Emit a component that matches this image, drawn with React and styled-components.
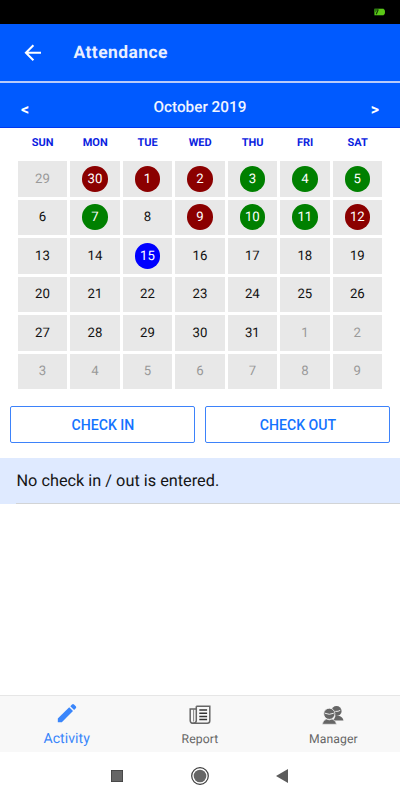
import styled, { createGlobalStyle } from 'styled-components';

const GlobalStyle = createGlobalStyle`
  * {
    box-sizing: border-box;
  }

  body {
    margin: 0;
    background: #ffffff;
    font-family: Roboto, 'Liberation Sans', sans-serif;
    text-rendering: geometricPrecision;
  }

  button {
    padding: 0;
    border: 0;
    background: none;
    font-family: inherit;
  }
`;

const Screen = styled.div`
  width: 400px;
  height: 800px;
  display: flex;
  flex-direction: column;
  overflow: hidden;
  background: #ffffff;
`;

const StatusBar = styled.div`
  height: 24px;
  display: flex;
  justify-content: flex-end;
  align-items: center;
  padding-right: 15px;
  background: #000000;
`;

const Header = styled.header`
  height: 59px;
  display: flex;
  align-items: center;
  padding-left: 24px;
  border-bottom: 2px solid #b9cbfa;
  background: #005aff;
`;

const BackButton = styled.button`
  width: 18px;
  height: 18px;
  display: flex;
`;

const Title = styled.h1`
  margin: 1px 0 0 31.5px;
  color: #e9efff;
  font-size: 17.4px;
  font-weight: 700;
  letter-spacing: 0.45px;
`;

const MonthBar = styled.div`
  height: 45px;
  display: flex;
  justify-content: space-between;
  align-items: center;
  padding: 3px 21px 0;
  border-bottom: 1px solid #0038f0;
  background: #005aff;
`;

const MonthButton = styled.button`
  padding-top: 5px;
  color: #ffffff;
  font-size: 16px;
  font-weight: 700;
`;

const MonthName = styled.div`
  padding-top: 1px;
  color: #f0f4ff;
  font-size: 15.3px;
  font-weight: 500;
`;

const Calendar = styled.section`
  padding: 0 17.7px 0 18px;
`;

const WeekRow = styled.div`
  height: 33px;
  display: grid;
  grid-template-columns: repeat(7, 1fr);
  column-gap: 3px;
  line-height: 30px;
`;

const Weekday = styled.div`
  color: #0a22e0;
  font-size: 11px;
  font-weight: 700;
  text-align: center;
`;

const DayGrid = styled.div`
  display: grid;
  grid-template-columns: repeat(7, 1fr);
  grid-auto-rows: 35.5px;
  gap: 3px;
`;

const DayCell = styled.div`
  display: flex;
  justify-content: center;
  align-items: center;
  padding-right: 0.5px;
  background: #e8e8e8;
`;

const dayColors = {
  absent: '#8b0000',
  present: '#008000',
  today: '#0000ff',
};

const Day = styled.span`
  width: 25.6px;
  height: 25.6px;
  border-radius: 50%;
  background: ${({ $status }) => dayColors[$status] || 'transparent'};
  color: ${({ $status, $outside }) =>
    dayColors[$status] ? '#ffffff' : $outside ? '#999999' : '#111111'};
  font-size: 13.2px;
  line-height: 27.4px;
  text-align: center;
`;

const ButtonRow = styled.div`
  display: flex;
  gap: 10px;
  padding: 17px 9.6px 15px 10.4px;
`;

const CheckButton = styled.button`
  flex: 1;
  height: 37px;
  border: 1px solid #3d82fa;
  border-radius: 2px;
  color: #1473ff;
  font-size: 14.1px;
  font-weight: 500;
`;

const Notice = styled.div`
  position: relative;
  height: 46px;
  padding-left: 16.5px;
  background: #dfeaff;
  color: #151515;
  font-size: 16.3px;
  line-height: 46px;

  &::after {
    content: '';
    position: absolute;
    right: 0;
    bottom: 0;
    left: 16px;
    height: 1px;
    background: #d2d4d6;
  }
`;

const TabBar = styled.nav`
  height: 57px;
  display: flex;
  margin-top: auto;
  border-top: 1px solid #e6e6e6;
  background: #f8f8f8;
`;

const Tab = styled.div`
  flex: 1;
  display: flex;
  flex-direction: column;
  align-items: center;
  padding-top: ${({ $active }) => ($active ? '6px' : '9px')};
  color: ${({ $active }) => ($active ? '#3a86fb' : '#666666')};
`;

const TabLabel = styled.span`
  margin-top: ${({ $active }) => ($active ? '7px' : '6px')};
  font-size: ${({ $active }) => ($active ? '14.1px' : '12.2px')};
  letter-spacing: ${({ $active }) => ($active ? '0.05px' : '0.1px')};
  line-height: 16px;
`;

const SystemBar = styled.div`
  height: 48px;
  display: flex;
  justify-content: center;
  align-items: center;
  gap: 67px;
  padding-right: 1px;
  background: #ffffff;
`;

const weekdays = ['SUN', 'MON', 'TUE', 'WED', 'THU', 'FRI', 'SAT'];

const statuses = {
  30: 'absent',
  1: 'absent',
  2: 'absent',
  3: 'present',
  4: 'present',
  5: 'present',
  7: 'present',
  9: 'absent',
  10: 'present',
  11: 'present',
  12: 'absent',
  15: 'today',
};

// the grid starts on September 29 and ends on November 9
const days = Array.from({ length: 42 }, (_, i) => {
  if (i < 2) {
    return { date: 29 + i, outside: true, status: i === 1 ? statuses[30] : null };
  }
  if (i > 32) {
    return { date: i - 32, outside: true };
  }
  return { date: i - 1, status: i - 1 < 16 ? statuses[i - 1] : null };
});

const BatteryIcon = () => (
  <svg width="11" height="8" viewBox="0 0 11 8">
    <rect x="0" y="0.5" width="10" height="7" rx="1" fill="#2d7810" />
    <path d="M4.5 1H9q2 0 2 3t-2 3H1V4.5z" fill="#5cc817" />
    <path d="M2.2 6.2 4.3 1.5" stroke="#123806" strokeWidth="1.1" />
  </svg>
);

const BackIcon = () => (
  <svg width="18" height="18" viewBox="0 0 18 18" fill="none" stroke="#ffffff" strokeWidth="2">
    <path d="M17 8.7H2M9.4 1.2 1.9 8.7l7.5 7.5" />
  </svg>
);

const PencilIcon = () => (
  <svg width="20" height="22" viewBox="0 0 20 22" fill="currentColor">
    <path d="M.8 16.5 12.2 5.3l3.8 3.8L4.8 20.3h-4z" />
    <path d="m13.3 4.2 1.7-1.7q1-1 2 0l1.8 1.8q1 1 0 2l-1.7 1.7z" />
  </svg>
);

const NewsIcon = () => (
  <svg width="22" height="20" viewBox="0 0 22 20" fill="none" stroke="currentColor" strokeWidth="1.5">
    <path d="M7.3 1.2h13.5v14.6q0 2.5-2.5 2.5H4" />
    <path d="M7.3 1.2v14.4q0 2.7-2.9 2.7-3.2 0-3.2-2.7V4h6" />
    <path d="M4.6 4.5v12" strokeWidth="0.8" />
    <path d="M10.3 5h7.8M10.3 8.2h7.8M10.3 11.4h7.8M10.3 14.6h7.8" stroke="#333333" />
  </svg>
);

const PeopleIcon = () => (
  <svg width="22" height="20" viewBox="0 0 22 20" fill="currentColor">
    <circle cx="14.5" cy="6" r="5.1" />
    <path d="M11.5 15.6h10q-.8-4-4.6-4.900l-3.400.4z" />
    <path
      d="M.3 19.200h14.200q-1-4.400-4.700-5.200l-2.500 1-2.500-1Q1.200 14.800.3 19.200z"
      stroke="#f8f8f8"
      strokeWidth="0.5"
    />
    <circle cx="7.300" cy="8.800" r="5.600" stroke="#f8f8f8" strokeWidth="0.800" />
    <path
      d="M2.800 8.200q4.500 2.200 9 0M13.300 6.400q3 .3 5-1.100"
      fill="none"
      stroke="#f8f8f8"
      strokeWidth="0.900"
    />
  </svg>
);

const App = () => {
  return (
    <>
      <GlobalStyle />
      <Screen>
        <StatusBar>
          <BatteryIcon />
        </StatusBar>
        <Header>
          <BackButton>
            <BackIcon />
          </BackButton>
          <Title>Attendance</Title>
        </Header>
        <MonthBar>
          <MonthButton>&lt;</MonthButton>
          <MonthName>October 2019</MonthName>
          <MonthButton>&gt;</MonthButton>
        </MonthBar>
        <Calendar>
          <WeekRow>
            {weekdays.map((name) => (
              <Weekday key={name}>{name}</Weekday>
            ))}
          </WeekRow>
          <DayGrid>
            {days.map((day, i) => (
              <DayCell key={i}>
                <Day $status={day.status} $outside={day.outside}>
                  {day.date}
                </Day>
              </DayCell>
            ))}
          </DayGrid>
        </Calendar>
        <ButtonRow>
          <CheckButton>CHECK IN</CheckButton>
          <CheckButton>CHECK OUT</CheckButton>
        </ButtonRow>
        <Notice>No check in / out is entered.</Notice>
        <TabBar>
          <Tab $active>
            <PencilIcon />
            <TabLabel $active>Activity</TabLabel>
          </Tab>
          <Tab>
            <NewsIcon />
            <TabLabel>Report</TabLabel>
          </Tab>
          <Tab>
            <PeopleIcon />
            <TabLabel>Manager</TabLabel>
          </Tab>
        </TabBar>
        <SystemBar>
          <svg width="12" height="12">
            <rect width="12" height="12" fill="#3d3d3d" />
            <rect x="0.7" y="0.7" width="10.6" height="10.6" fill="#666666" />
          </svg>
          <svg width="19" height="18" viewBox="0 0 19 18">
            <circle cx="10" cy="9" r="8.3" fill="none" stroke="#3d3d3d" strokeWidth="1.2" />
            <circle cx="10" cy="9" r="6.3" fill="#666666" />
          </svg>
          <svg width="12" height="14" viewBox="0 0 12 14">
            <path d="M12 0v14L0 7z" fill="#5c5c5c" />
          </svg>
        </SystemBar>
      </Screen>
    </>
  );
};

export default App;
